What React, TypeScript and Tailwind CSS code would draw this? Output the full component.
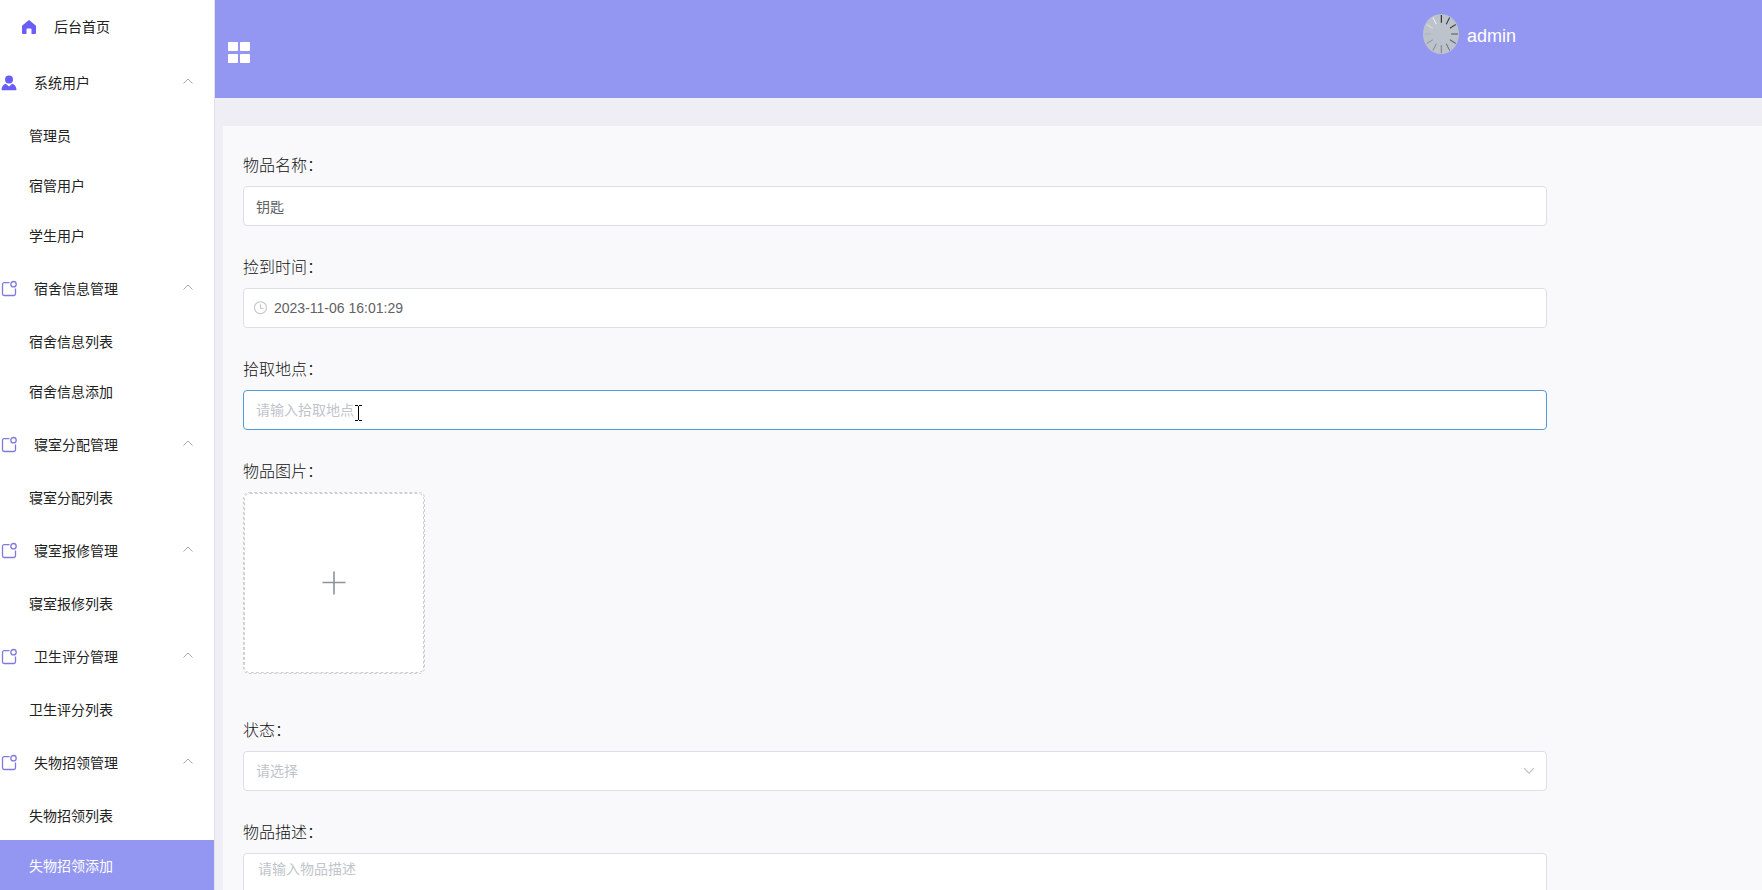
import React, { useState } from 'react';

type MenuGroup = {
  title: string;
  icon: 'user' | 'box';
  items: string[];
};

const menu: MenuGroup[] = [
  { title: '系统用户', icon: 'user', items: ['管理员', '宿管用户', '学生用户'] },
  { title: '宿舍信息管理', icon: 'box', items: ['宿舍信息列表', '宿舍信息添加'] },
  { title: '寝室分配管理', icon: 'box', items: ['寝室分配列表'] },
  { title: '寝室报修管理', icon: 'box', items: ['寝室报修列表'] },
  { title: '卫生评分管理', icon: 'box', items: ['卫生评分列表'] },
  { title: '失物招领管理', icon: 'box', items: ['失物招领列表', '失物招领添加'] },
];

const HomeIcon = () => (
  <svg className="h-[18px] w-[18px]" viewBox="0 0 18 18" fill="#6b5ef8">
    <path d="M8.300 2.400a1.100 1.100 0 0 1 1.400 0l5.700 4.900c.4.300.6.800.6 1.300V15a1 1 0 0 1-1 1h-3.500v-4.700a.8.8 0 0 0-.8-.8H7.300a.8.8 0 0 0-.8.8V16H3a1 1 0 0 1-1-1V8.600c0-.5.2-1 .6-1.300z" />
  </svg>
);

const UserIcon = () => (
  <svg className="h-[18px] w-[18px]" viewBox="0 0 18 18" fill="#6b5ef8">
    <circle cx="9" cy="5.500" r="4" />
    <path d="M5.800 9.800 9 12.500l3.200-2.700c2.500.8 4 2.900 4.300 5.700a.6.6 0 0 1-.6.700H2.100a.6.6 0 0 1-.6-.700c.300-2.800 1.800-4.900 4.300-5.700z" />
  </svg>
);

const BoxIcon = () => (
  <svg className="h-[18px] w-[18px]" viewBox="0 0 18 18" fill="none" stroke="#8079dd" strokeWidth="1.300">
    <path d="M9.500 2.600H4.200A1.700 1.700 0 0 0 2.500 4.300v9.500a1.700 1.700 0 0 0 1.700 1.700h9.600a1.700 1.700 0 0 0 1.700-1.700V8.500" />
    <circle cx="13.500" cy="4.200" r="2.700" />
  </svg>
);

const GridIcon = () => (
  <svg className="h-[22px] w-[22px]" viewBox="0 0 22 22" fill="#fff">
    <rect x="0" y="0" width="10" height="9" rx="0.800" />
    <rect x="12" y="0" width="10" height="9" rx="0.800" />
    <rect x="0" y="12" width="10" height="9" rx="0.800" />
    <rect x="12" y="12" width="10" height="9" rx="0.800" />
  </svg>
);

const spokes = ['#111', '#2a2a2a', '#3c3c3c', '#5c5c5c', '#666', '#6f6f6f', '#7c7c7c', '#8c8c8c', '#999', '#b0b4b8', '#dcdcdc', '#eee'];

const Avatar = () => (
  <svg className="h-10 w-9" viewBox="0 0 36 40">
    <ellipse cx="18" cy="20" rx="18" ry="20" fill="#bcc3cc" />
    <g transform="translate(18.300 20) scale(0.880 1)">
      {spokes.map((color, i) => (
        <line
          key={color}
          x1="0"
          y1="-19"
          x2="0"
          y2="-11.300"
          stroke={color}
          strokeWidth="1.100"
          transform={`rotate(${i * 30})`}
        />
      ))}
    </g>
  </svg>
);

const Sidebar = () => {
  const [closed, setClosed] = useState<string[]>([]);
  const [active, setActive] = useState('失物招领添加');

  const toggle = (title: string) => {
    setClosed(closed.includes(title) ? closed.filter((t) => t !== title) : [...closed, title]);
  };

  return (
    <nav className="w-[215px] shrink-0 overflow-hidden border-r border-[#e2e2e8] bg-white text-sm text-[#222]">
      <a href="#home" className="flex h-[54px] items-center gap-4 pl-5">
        <HomeIcon />
        <span>后台首页</span>
      </a>
      {menu.map((group) => (
        <div key={group.title}>
          <button
            type="button"
            onClick={() => toggle(group.title)}
            className="flex h-14 w-full items-center gap-4 pt-0.5 pr-5 text-left"
          >
            {group.icon === 'user' ? <UserIcon /> : <BoxIcon />}
            <span className="flex-1">{group.title}</span>
            <svg className="h-3 w-3" viewBox="0 0 12 12" fill="none" stroke="#a5a7ab">
              <path d={closed.includes(group.title) ? 'M1.500 3 6 7.500 10.500 3' : 'M1.500 6.500 6 2l4.500 4.500'} />
            </svg>
          </button>
          {!closed.includes(group.title) && (
            <ul>
              {group.items.map((item) => (
                <li key={item}>
                  <a
                    href="#item"
                    onClick={() => setActive(item)}
                    className={
                      item === active
                        ? 'flex h-[50px] items-center bg-[#9497f1] pt-0.5 pl-[29px] text-white'
                        : 'flex h-[50px] items-center pt-0.5 pl-[29px]'
                    }
                  >
                    {item}
                  </a>
                </li>
              ))}
            </ul>
          )}
        </div>
      ))}
    </nav>
  );
};

const labelClass = 'block text-base leading-10 font-light text-[#111]';
const inputClass =
  'block h-10 w-full rounded border border-[#dcdfe6] bg-white px-3 text-sm text-[#606266] outline-none placeholder:text-[#c0c4cc]';

const App: React.FC = () => {
  const [name, setName] = useState('钥匙');
  const [time, setTime] = useState('2023-11-06 16:01:29');
  const [place, setPlace] = useState('');
  const [status, setStatus] = useState('');
  const [detail, setDetail] = useState('');

  return (
    <div className="flex h-screen overflow-hidden bg-[#efeef4] font-['Liberation_Sans','Noto_Sans_CJK_SC',sans-serif]">
      <Sidebar />
      <div className="flex min-w-0 flex-1 flex-col">
        <header className="flex h-[98px] shrink-0 items-start justify-between bg-[#9497f1] pr-[246px] pl-[13px]">
          <button type="button" aria-label="菜单" className="mt-[42px]">
            <GridIcon />
          </button>
          <div className="mt-3.5 flex items-center gap-2 text-lg text-white">
            <Avatar />
            <span className="pt-1">admin</span>
          </div>
        </header>

        <main className="mt-7 ml-2 min-h-0 flex-1 overflow-hidden bg-[#f9f9fc] p-5">
          <form className="flex w-[87%] flex-col gap-[22px]">
            <div>
              <label htmlFor="name" className={labelClass}>物品名称：</label>
              <input id="name" type="text" className={inputClass} value={name} onChange={(e) => setName(e.target.value)} />
            </div>

            <div>
              <label htmlFor="time" className={labelClass}>捡到时间：</label>
              <div className="relative">
                <svg className="absolute top-[13px] left-[11px] h-3.5 w-3.5" viewBox="0 0 14 14" fill="none" stroke="#c0c4cc" strokeWidth="1.100">
                  <circle cx="6.500" cy="6.700" r="6" />
                  <path d="M6.500 3.200v4H9.500" />
                </svg>
                <input
                  id="time"
                  type="text"
                  className="block h-10 w-full rounded border border-[#dcdfe6] bg-white pr-3 pl-[30px] text-sm text-[#606266] outline-none"
                  value={time}
                  onChange={(e) => setTime(e.target.value)}
                />
              </div>
            </div>

            <div>
              <label htmlFor="place" className={labelClass}>拾取地点：</label>
              <div className="relative">
                <input
                  id="place"
                  type="text"
                  placeholder="请输入拾取地点"
                  className="block h-10 w-full rounded border border-[#4f9bd9] bg-white px-3 text-sm text-[#606266] outline-none placeholder:text-[#c0c4cc]"
                  value={place}
                  onChange={(e) => setPlace(e.target.value)}
                />
                {/* text cursor */}
                <svg className="pointer-events-none absolute top-[15px] left-28 h-4 w-[7px]" viewBox="0 0 7 16" fill="none" stroke="#000" shapeRendering="crispEdges">
                  <path d="M0 .5h3M4 .5h3M3.500 1v14M0 15.500h3M4 15.500h3" />
                </svg>
              </div>
            </div>

            <div className="pb-[15px]">
              <span className={labelClass}>物品图片：</span>
              <div className="w-fit rounded-md border border-dashed border-[#d0d0d0] bg-white">
                <button
                  type="button"
                  aria-label="上传图片"
                  className="flex h-[180px] w-[180px] items-center justify-center rounded-md border border-dashed border-[#d0d0d0]"
                >
                  <svg className="h-6 w-6" viewBox="0 0 24 24" stroke="#8c939d" strokeWidth="1.600">
                    <path d="M12 .5v23M.5 11.500h23" />
                  </svg>
                </button>
              </div>
            </div>

            <div>
              <label htmlFor="status" className={labelClass}>状态：</label>
              <div className="relative">
                <select
                  id="status"
                  className="block h-10 w-full appearance-none rounded border border-[#dcdfe6] bg-white px-3 text-sm text-[#c0c4cc] outline-none"
                  value={status}
                  onChange={(e) => setStatus(e.target.value)}
                >
                  <option value="">请选择</option>
                </select>
                <svg className="pointer-events-none absolute top-3.5 right-3 h-3 w-3" viewBox="0 0 12 12" fill="none" stroke="#c0c4cc" strokeWidth="1.200">
                  <path d="M1 3.200 6 8.200l5-5" />
                </svg>
              </div>
            </div>

            <div>
              <label htmlFor="detail" className={labelClass}>物品描述：</label>
              <textarea
                id="detail"
                rows={5}
                placeholder="请输入物品描述"
                className="block w-full resize-none rounded border border-[#dcdfe6] bg-white px-3.5 py-[5px] text-sm text-[#606266] outline-none placeholder:text-[#c0c4cc]"
                value={detail}
                onChange={(e) => setDetail(e.target.value)}
              />
            </div>
          </form>
        </main>
      </div>
    </div>
  );
};

export default App;
